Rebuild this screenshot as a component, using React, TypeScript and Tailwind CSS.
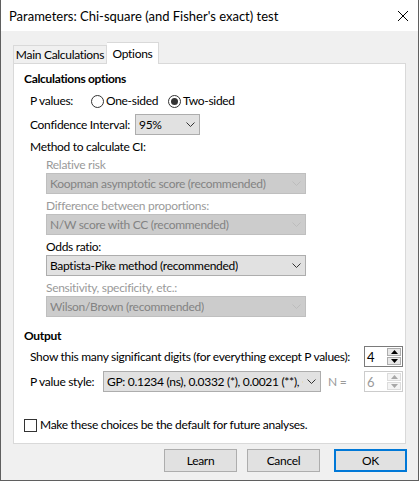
import React from "react";

const font = { fontFamily: 'Lato, "Noto Sans", sans-serif' };

function Chevron({ disabled }: { disabled?: boolean }) {
  return (
    <svg width="9" height="5" viewBox="0 0 9 5" className="shrink-0">
      <path d="M0.5 0.5 L4.5 4.5 L8.5 0.5" fill="none" stroke={disabled ? "#bcbcbc" : "#333333"} strokeWidth="1" />
    </svg>
  );
}

function Select({
  text,
  width,
  disabled,
}: {
  text: string;
  width: string;
  disabled?: boolean;
}) {
  return (
    <div
      className={`${width} h-[21px] flex items-center justify-between gap-[4px] pl-[3px] pr-[4px] border overflow-hidden ${
        disabled ? "bg-[#cccccc] border-[#bfbfbf] text-[#838383]" : "bg-[#e1e1e1] border-[#adadad] text-black"
      }`}
    >
      <span className="whitespace-nowrap overflow-hidden">{text}</span>
      <Chevron disabled={disabled} />
    </div>
  );
}

function Spinner({ value, disabled }: { value: string; disabled?: boolean }) {
  return (
    <div
      className={`w-[39px] h-[21px] flex border ${
        disabled ? "border-[#cccccc] text-[#9a9a9a]" : "border-[#7a7a7a] text-black"
      } bg-white`}
    >
      <div className="flex-1 flex items-center pl-[2px] text-[13px]">{value}</div>
      <div className="w-[16px] flex flex-col p-[1px] gap-[1px]">
        <div
          className={`flex-1 flex items-center justify-center border ${
            disabled ? "border-[#dcdcdc] bg-[#f4f4f4]" : "border-[#adadad] bg-[#e8e8e8]"
          }`}
        >
          <svg width="7" height="4" viewBox="0 0 7 4">
            <path d="M0 4 L3.5 0 L7 4 Z" fill={disabled ? "#a8a8a8" : "#000"} />
          </svg>
        </div>
        <div
          className={`flex-1 flex items-center justify-center border ${
            disabled ? "border-[#dcdcdc] bg-[#f4f4f4]" : "border-[#adadad] bg-[#e8e8e8]"
          }`}
        >
          <svg width="7" height="4" viewBox="0 0 7 4">
            <path d="M0 0 L7 0 L3.5 4 Z" fill={disabled ? "#a8a8a8" : "#000"} />
          </svg>
        </div>
      </div>
    </div>
  );
}

function Radio({ checked, label, width }: { checked?: boolean; label: string; width?: string }) {
  return (
    <div className={`flex items-center gap-[2px] ${width ?? ""}`}>
      <div className="w-[13px] h-[13px] rounded-full border border-[#333333] bg-white flex items-center justify-center">
        {checked && <div className="w-[7px] h-[7px] rounded-full bg-[#333333]" />}
      </div>
      <span>{label}</span>
    </div>
  );
}

function Button({ label, primary }: { label: string; primary?: boolean }) {
  return (
    <div
      className={`w-[73px] h-[23px] flex items-center justify-center bg-[#e1e1e1] ${
        primary ? "border-2 border-[#0078d7]" : "border border-[#adadad]"
      }`}
    >
      {label}
    </div>
  );
}

export default function App() {
  return (
    <div
      style={font}
      className="w-[419px] h-[481px] flex flex-col bg-[#f0f0f0] border-l border-r border-b border-[#5f5f5f] text-[12px] leading-[16px] tracking-[-0.3px] text-black"
    >
      {/* title bar */}
      <div className="h-[31px] bg-white flex items-center justify-between pl-[8px] pr-[10px] shrink-0">
        <span className="text-[13px] tracking-normal">Parameters: Chi-square (and Fisher's exact) test</span>
        <svg width="10" height="10" viewBox="0 0 10 10">
          <path d="M0 0 L10 10 M10 0 L0 10" stroke="#000" strokeWidth="1" />
        </svg>
      </div>

      <div className="pl-[12px] pr-[12px] pt-[11px]">
        {/* tabs */}
        <div className="flex items-end h-[21px]">
          <div className="h-[18px] w-[94px] flex items-center justify-center whitespace-nowrap border border-b-0 border-[#d9d9d9] bg-[#f0f0f0]">
            Main Calculations
          </div>
          <div className="relative z-10 h-[22px] w-[52px] -mb-px flex items-center justify-center border border-b-0 border-l-0 border-[#d9d9d9] bg-white">
            Options
          </div>
        </div>

        {/* panel */}
        <div className="h-[381px] border border-[#d9d9d9] bg-white pl-[10px] pr-[2px] pt-[7px] flex flex-col">
          <div className="font-bold h-[16px]">Calculations options</div>

          <div className="pl-[6px] flex flex-col">
            <div className="mt-[6px] h-[16px] flex items-center">
              <span className="w-[61px]">P values:</span>
              <Radio label="One-sided" width="w-[77px]" />
              <Radio checked label="Two-sided" />
            </div>

            <div className="mt-[5px] flex items-center">
              <span className="w-[105px]">Confidence Interval:</span>
              <Select text="95%" width="w-[65px]" />
            </div>

            <div className="mt-[4px] h-[16px]">Method to calculate CI:</div>

            <div className="pl-[16px] flex flex-col">
              <div className="mt-[2px] h-[16px] text-[#9a9a9a]">Relative risk</div>
              <Select text="Koopman asymptotic score (recommended)" width="w-[260px]" disabled />
              <div className="mt-[4px] h-[16px] text-[#9a9a9a]">Difference between proportions:</div>
              <Select text="N/W score with CC (recommended)" width="w-[260px]" disabled />
              <div className="mt-[4px] h-[16px]">Odds ratio:</div>
              <Select text="Baptista-Pike method (recommended)" width="w-[260px]" />
              <div className="mt-[4px] h-[16px] text-[#9a9a9a]">Sensitivity, specificity, etc.:</div>
              <Select text="Wilson/Brown (recommended)" width="w-[260px]" disabled />
            </div>
          </div>

          <div className="mt-[11px] font-bold h-[16px]">Output</div>

          <div className="pl-[6px] flex flex-col">
            <div className="mt-[2px] flex items-center justify-between">
              <span className="whitespace-nowrap">Show this many significant digits (for everything except P values):</span>
              <Spinner value="4" />
            </div>
            <div className="mt-[4px] flex items-center">
              <span className="w-[73px]">P value style:</span>
              <Select text="GP: 0.1234 (ns), 0.0332 (*), 0.0021 (**), <0.0001 (****)" width="w-[218px]" />
              <span className="ml-[7px] text-[#9a9a9a]">N =</span>
              <div className="ml-auto">
                <Spinner value="6" disabled />
              </div>
            </div>
          </div>

          <div className="mt-[25px] flex items-center gap-[3px]">
            <div className="w-[13px] h-[13px] border border-[#333333] bg-white" />
            <span>Make these choices be the default for future analyses.</span>
          </div>
        </div>
      </div>

      {/* buttons */}
      <div className="mt-[5px] flex justify-end pr-[11px]">
        <Button label="Learn" />
        <div className="w-[10px]" />
        <Button label="Cancel" />
        <div className="w-[14px]" />
        <Button label="OK" primary />
      </div>
    </div>
  );
}
